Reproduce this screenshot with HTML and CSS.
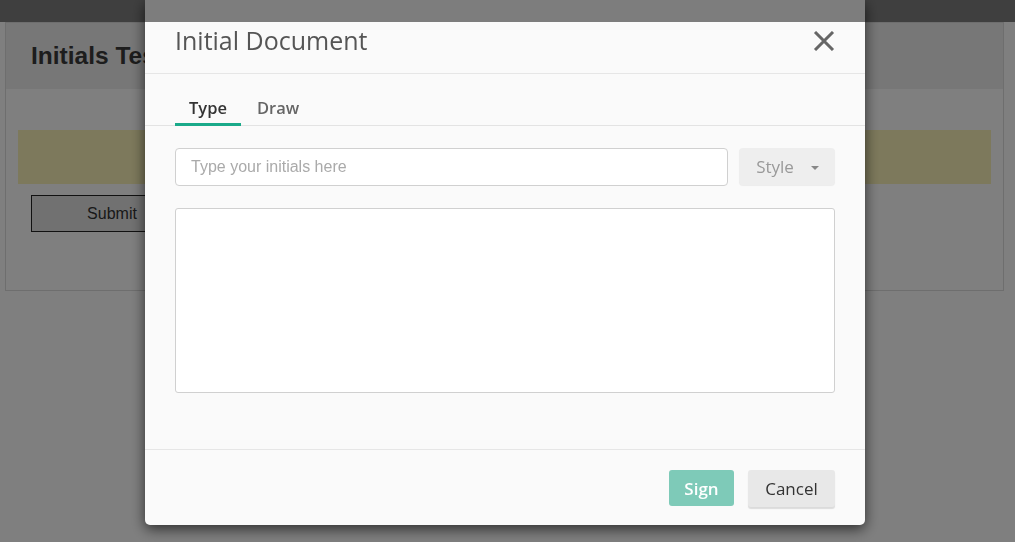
FILE: index.html
```html
<!DOCTYPE html>
<html lang="en">
<head>
    <meta charset="UTF-8">
    <meta name="viewport" content="width=device-width, initial-scale=1.0">
    <title>Initials Test</title>
    <link rel="stylesheet" href="styles.css">
</head>
<body>
    <div class="page">
        <div class="card">
            <div class="card-header">
                <h2>Initials Test</h2>
            </div>
            <div class="card-body">
                <div class="notice"></div>
                <button class="submit">Submit</button>
            </div>
        </div>
    </div>

    <div class="backdrop"></div>

    <div class="modal-wrap">
        <div class="modal">
            <div class="modal-header">
                <h3>Initial Document</h3>
                <button class="close" aria-label="Close">
                    <svg width="22" height="20" viewBox="0 0 22 20">
                        <path d="M2 1 L20 19 M20 1 L2 19" stroke="#666" stroke-width="3" fill="none"/>
                    </svg>
                </button>
            </div>
            <div class="tabs">
                <a class="tab active">Type</a>
                <a class="tab">Draw</a>
            </div>
            <div class="modal-body">
                <div class="input-row">
                    <input type="text" class="initials" placeholder="Type your initials here">
                    <button class="style-btn">Style <span class="caret"></span></button>
                </div>
                <div class="preview"></div>
            </div>
            <div class="modal-footer">
                <button class="btn sign">Sign</button>
                <button class="btn cancel">Cancel</button>
            </div>
        </div>
    </div>

    <div class="top-shade"></div>
</body>
</html>
```

FILE: styles.css
```css
body {
    margin: 0;
    background: #fff;
    font-family: "Liberation Sans", Arial, sans-serif;
}
.page {
    padding: 22px 10px 0 5px;
}
.card {
    width: 997px;
    border: 1px solid #dcdcdc;
}
.card-header {
    height: 66px;
    background: #eeeeee;
    padding-left: 25px;
    display: flex;
    align-items: center;
}
.card-header h2 {
    margin: 0;
    font-size: 24.5px;
    color: #3a3a3a;
}
.card-body {
    padding: 41px 12px 58px 12px;
}
.notice {
    height: 54px;
    background: #fbf3b8;
}
.submit {
    display: block;
    margin: 11px 0 0 13px;
    width: 162px;
    height: 37px;
    background: #e2e2e2;
    border: 1px solid #222;
    font-family: "Liberation Sans", Arial, sans-serif;
    font-size: 16px;
    color: #333;
}
.backdrop {
    position: fixed;
    inset: 0;
    background: rgba(0, 0, 0, 0.5);
}
.top-shade {
    position: fixed;
    top: 0;
    left: 0;
    right: 0;
    height: 22px;
    background: rgba(0, 0, 0, 0.5);
}
.modal-wrap {
    position: fixed;
    inset: 0;
    display: flex;
    justify-content: center;
    align-items: flex-start;
    padding-right: 5px;
}
.modal {
    width: 720px;
    background: #fafafa;
    border-radius: 0 0 5px 5px;
    box-shadow: 0 4px 14px rgba(0, 0, 0, 0.65);
    font-family: "Open Sans", sans-serif;
}
.modal-header {
    display: flex;
    justify-content: space-between;
    align-items: flex-start;
    padding: 25px 30px 18px 30px;
    border-bottom: 1px solid #e6e6e6;
}
.modal-header h3 {
    margin: 0;
    font-size: 25px;
    line-height: 30px;
    font-weight: 400;
    color: #555;
}
.close {
    background: none;
    border: 0;
    padding: 0;
    margin-top: 6px;
    cursor: pointer;
    line-height: 0;
}
.tabs {
    display: flex;
    padding: 22px 30px 0 30px;
    border-bottom: 1px solid #e3e3e3;
}
.tab {
    padding: 0 14px 3px 14px;
    margin-right: 2px;
    margin-bottom: -1px;
    line-height: 24px;
    font-size: 16.5px;
    font-weight: 600;
    color: #666;
    border-bottom: 3px solid transparent;
    cursor: pointer;
}
.tab.active {
    color: #333;
    border-bottom-color: #1aaa8a;
}
.modal-body {
    padding: 22px 30px 56px 30px;
}
.input-row {
    display: flex;
    gap: 11px;
}
.initials {
    flex: 1;
    height: 38px;
    box-sizing: border-box;
    border: 1px solid #d0d0d0;
    border-radius: 4px;
    padding: 0 15px;
    font-family: "Liberation Sans", Arial, sans-serif;
    font-size: 16px;
    background: #fff;
}
.initials::placeholder {
    color: #aaa;
}
.style-btn {
    width: 96px;
    height: 37px;
    border: 0;
    border-radius: 4px;
    background: #eeeeee;
    box-shadow: 0 1px 1px rgba(0, 0, 0, 0.06);
    font-family: "Open Sans", sans-serif;
    font-size: 17px;
    color: #999;
    padding: 0 0 0 1px;
    display: flex;
    align-items: center;
    justify-content: center;
    gap: 17px;
}
.caret {
    width: 0;
    height: 0;
    border-left: 4px solid transparent;
    border-right: 4px solid transparent;
    border-top: 4px solid #888;
    margin-top: 2px;
}
.preview {
    margin-top: 22px;
    height: 183px;
    border: 1px solid #d0d0d0;
    border-radius: 3px;
    background: #fff;
}
.modal-footer {
    display: flex;
    justify-content: flex-end;
    gap: 14px;
    padding: 20px 30px 18px 30px;
    border-top: 1px solid #e6e6e6;
}
.btn {
    height: 37px;
    border: 0;
    border-radius: 3px;
    font-family: "Open Sans", sans-serif;
    font-size: 17px;
    cursor: pointer;
}
.sign {
    width: 65px;
    height: 36px;
    background: #7ecab8;
    color: #fff;
    font-weight: 600;
}
.cancel {
    width: 87px;
    background: #e8e8e8;
    color: #333;
    box-shadow: 0 2px 1px rgba(0, 0, 0, 0.12);
}
```
